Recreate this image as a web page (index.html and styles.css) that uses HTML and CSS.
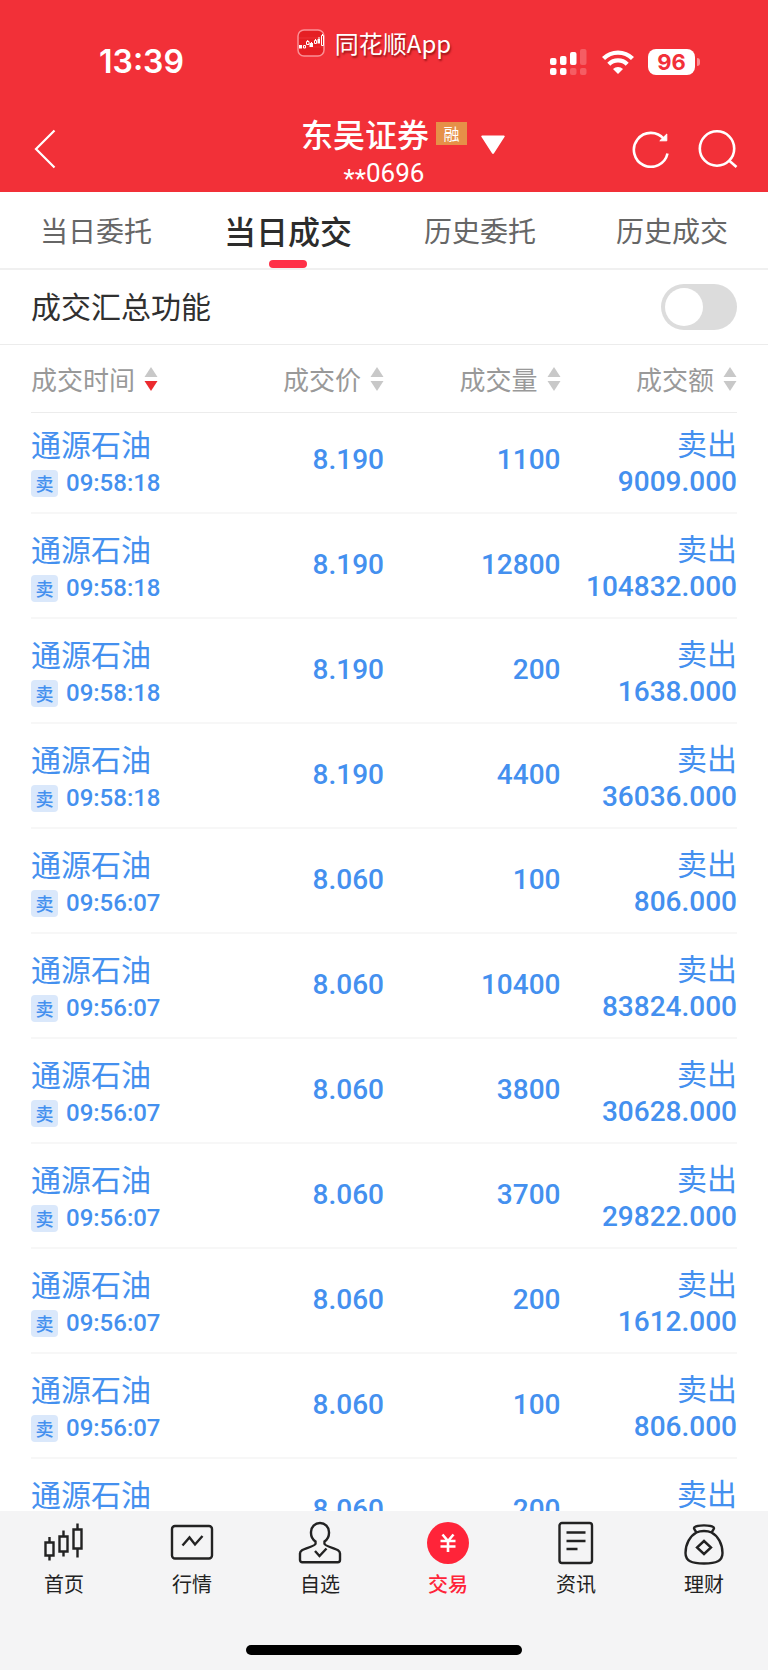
FILE: index.html
```html
<!DOCTYPE html>
<html lang="zh-CN">
<head>
<meta charset="utf-8">
<meta name="viewport" content="width=device-width, initial-scale=1">
<title>当日成交</title>
<link rel="stylesheet" href="styles.css">
</head>
<body>
<div class="app">
  <header class="header">
    <div class="status">
      <time class="clock">13:39</time>
      <div class="brand">
        <svg class="brand-icon" width="28" height="28" viewBox="0 0 28 28" fill="none">
          <rect x="1" y="1" width="26" height="26" rx="6" fill="#e51f24" stroke="#fa9095" stroke-width="1.5"/>
          <path d="M2 9h24M2 18h24" stroke="#f0474b" stroke-width=".5"/>
          <path d="M2 16h3v3.500H2zM12.500 14h3.500v4h-3.500zM20.500 10h2.500v4.500h-2.500z" fill="#fff"/>
          <path d="M6.500 16.500h2v2.500h-2zM9.500 12.500h2.500v3h-2.500zM10.700 11v1.500M17.500 11.500h2v3h-2zM18.500 10v1.500M24.500 6.500h2v10h-2zM25.500 5v1.500M22 8v2M14.500 13v1" stroke="#fff" stroke-width="1"/>
        </svg>
        <span>同花顺App</span>
      </div>
      <div class="indicators">
        <svg width="38" height="26" viewBox="0 0 38 26" fill="#fff">
          <rect x="0" y="9" width="6.500" height="7" rx="2"/>
          <rect x="10" y="7" width="6.500" height="9" rx="2"/>
          <rect x="20" y="3" width="6.500" height="13" rx="2"/>
          <rect x="30" y="0" width="6.500" height="16" rx="2" opacity=".22"/>
          <rect x="0" y="19" width="6.500" height="7" rx="2"/>
          <rect x="10" y="19" width="6.500" height="7" rx="2"/>
          <rect x="20" y="19" width="6.500" height="7" rx="2" opacity=".22"/>
          <rect x="30" y="19" width="6.500" height="7" rx="2" opacity=".22"/>
        </svg>
        <svg width="32" height="24" viewBox="0 0 32 24">
          <g fill="none" stroke="#fff" stroke-width="4.300">
            <path d="M1.500 8.600a20.500 20.500 0 0 1 29 0"/>
            <path d="M6.800 14.200a13 13 0 0 1 18.400 0"/>
          </g>
          <path d="M16 24l-5-5.100a7.200 7.200 0 0 1 10 0z" fill="#fff"/>
        </svg>
        <div class="battery"><span class="battery-level">96</span><span class="battery-tip"></span></div>
      </div>
    </div>
    <div class="nav">
      <button class="icon-btn back" type="button" aria-label="返回">
        <svg width="22" height="40" viewBox="0 0 22 40" fill="none" stroke="#fff" stroke-width="2.200"><path d="M20.500 1.500L2 20l18.500 18.500"/></svg>
      </button>
      <div class="account">
        <h1 class="account-name">东吴证券<span class="tag">融</span></h1>
        <p class="account-no"><span class="mask">**</span>0696</p>
      </div>
      <div class="nav-side">
        <button class="icon-btn switch" type="button" aria-label="切换账户">
          <svg width="24" height="20" viewBox="0 0 24 20" fill="#fff"><path d="M1.500 0.500h21a1 1 0 0 1 .8 1.800L13 18.300a1.300 1.300 0 0 1-2 0L.700 2.300A1 1 0 0 1 1.500.500z"/></svg>
        </button>
        <button class="icon-btn refresh" type="button" aria-label="刷新">
          <svg width="38" height="38" viewBox="0 0 38 38" fill="none" stroke="#fff" stroke-width="2.600"><path d="M35.500 23.500A17 17 0 1 1 32 9"/><path d="M34.800 4v6.800h-7z" fill="#fff" stroke-width="1"/></svg>
        </button>
        <button class="icon-btn" type="button" aria-label="搜索">
          <svg width="40" height="40" viewBox="0 0 40 40" fill="none" stroke="#fff" stroke-width="2.600"><circle cx="19" cy="19.500" r="17.200"/><path d="M31 31.500l7.500 6.500"/></svg>
        </button>
      </div>
    </div>
  </header>

  <nav class="tabs">
    <button class="tab" type="button">当日委托</button>
    <button class="tab tab-active" type="button">当日成交</button>
    <button class="tab" type="button">历史委托</button>
    <button class="tab" type="button">历史成交</button>
  </nav>

  <div class="summary">
    <label class="summary-label" for="summary-toggle">成交汇总功能</label>
    <input class="toggle" id="summary-toggle" type="checkbox" role="switch">
  </div>

  <main class="list">
    <table class="deals">
      <thead>
        <tr>
          <th scope="col"><button class="sort sort-desc" type="button">成交时间<svg width="14" height="26" viewBox="0 0 14 26"><path class="up" d="M7 1l6.500 10H.500z"/><path class="down" d="M7 25l6.500-10H.500z"/></svg></button></th>
          <th scope="col"><button class="sort" type="button">成交价<svg width="14" height="26" viewBox="0 0 14 26"><path class="up" d="M7 1l6.500 10H.500z"/><path class="down" d="M7 25l6.500-10H.500z"/></svg></button></th>
          <th scope="col"><button class="sort" type="button">成交量<svg width="14" height="26" viewBox="0 0 14 26"><path class="up" d="M7 1l6.500 10H.500z"/><path class="down" d="M7 25l6.500-10H.500z"/></svg></button></th>
          <th scope="col"><button class="sort" type="button">成交额<svg width="14" height="26" viewBox="0 0 14 26"><path class="up" d="M7 1l6.500 10H.500z"/><path class="down" d="M7 25l6.500-10H.500z"/></svg></button></th>
        </tr>
      </thead>
      <tbody>
        <tr><td><div class="stock">通源石油</div><div class="when"><span class="side">卖</span><time>09:58:18</time></div></td><td class="num">8.190</td><td class="num">1100</td><td><div class="action">卖出</div><div class="amount">9009.000</div></td></tr>
        <tr><td><div class="stock">通源石油</div><div class="when"><span class="side">卖</span><time>09:58:18</time></div></td><td class="num">8.190</td><td class="num">12800</td><td><div class="action">卖出</div><div class="amount">104832.000</div></td></tr>
        <tr><td><div class="stock">通源石油</div><div class="when"><span class="side">卖</span><time>09:58:18</time></div></td><td class="num">8.190</td><td class="num">200</td><td><div class="action">卖出</div><div class="amount">1638.000</div></td></tr>
        <tr><td><div class="stock">通源石油</div><div class="when"><span class="side">卖</span><time>09:58:18</time></div></td><td class="num">8.190</td><td class="num">4400</td><td><div class="action">卖出</div><div class="amount">36036.000</div></td></tr>
        <tr><td><div class="stock">通源石油</div><div class="when"><span class="side">卖</span><time>09:56:07</time></div></td><td class="num">8.060</td><td class="num">100</td><td><div class="action">卖出</div><div class="amount">806.000</div></td></tr>
        <tr><td><div class="stock">通源石油</div><div class="when"><span class="side">卖</span><time>09:56:07</time></div></td><td class="num">8.060</td><td class="num">10400</td><td><div class="action">卖出</div><div class="amount">83824.000</div></td></tr>
        <tr><td><div class="stock">通源石油</div><div class="when"><span class="side">卖</span><time>09:56:07</time></div></td><td class="num">8.060</td><td class="num">3800</td><td><div class="action">卖出</div><div class="amount">30628.000</div></td></tr>
        <tr><td><div class="stock">通源石油</div><div class="when"><span class="side">卖</span><time>09:56:07</time></div></td><td class="num">8.060</td><td class="num">3700</td><td><div class="action">卖出</div><div class="amount">29822.000</div></td></tr>
        <tr><td><div class="stock">通源石油</div><div class="when"><span class="side">卖</span><time>09:56:07</time></div></td><td class="num">8.060</td><td class="num">200</td><td><div class="action">卖出</div><div class="amount">1612.000</div></td></tr>
        <tr><td><div class="stock">通源石油</div><div class="when"><span class="side">卖</span><time>09:56:07</time></div></td><td class="num">8.060</td><td class="num">100</td><td><div class="action">卖出</div><div class="amount">806.000</div></td></tr>
        <tr><td><div class="stock">通源石油</div></td><td class="num">8.060</td><td class="num">200</td><td><div class="action">卖出</div></td></tr>
      </tbody>
    </table>
  </main>

  <footer class="footer">
    <nav class="menu">
      <a class="menu-item" href="#home">
        <svg width="44" height="44" viewBox="0 0 44 44"><path d="M3.500 21.500h8v13h-8zM17.500 15.500h8v15h-8zM31.500 8.500h8v19h-8zM7.500 16v5M7.500 34.500v5M21.500 9.500v6M21.500 30.500v5M35.500 2.500v6M35.500 27.500v9"/></svg>
        首页
      </a>
      <a class="menu-item" href="#market">
        <svg width="44" height="44" viewBox="0 0 44 44"><rect x="2" y="5" width="40" height="32.500" rx="3"/><path d="M12.500 24.500l7-8 5.500 7 7.500-8.500"/></svg>
        行情
      </a>
      <a class="menu-item" href="#watchlist">
        <svg width="44" height="44" viewBox="0 0 44 44"><path d="M17.500 20.500v2.500c0 1.500-11 5-13.500 6.300-1.300.9-2 1.900-2 3.200V39a2.200 2.200 0 0 0 2.200 2.200h35.600A2.200 2.200 0 0 0 42 39v-6.500c0-1.300-.7-2.300-2-3.200-2.500-1.300-13.500-4.800-13.500-6.300v-2.500c3-2 4.500-5 4.500-8.500v-1c0-5-4-9-9-9s-9 4-9 9v1c0 3.500 1.500 6.500 4.500 8.500z"/><path d="M17 30l4.500 5 7-7.500"/></svg>
        自选
      </a>
      <a class="menu-item menu-active" href="#trade">
        <svg width="44" height="44" viewBox="0 0 44 44"><circle class="disc" cx="22" cy="22" r="21"/><path class="yen" d="M16.500 13.500l5.500 6.500 5.500-6.500M14.500 20h15M14.500 25.500h15M22 20v11"/></svg>
        交易
      </a>
      <a class="menu-item" href="#news">
        <svg width="44" height="44" viewBox="0 0 44 44"><rect x="5.500" y="2" width="32.500" height="40" rx="2.500"/><path d="M12.500 11.500h19M12.500 20h19M12.500 28h11"/></svg>
        资讯
      </a>
      <a class="menu-item" href="#wealth">
        <svg width="44" height="44" viewBox="0 0 44 44"><path d="M14.500 11.500c-1.500-2-2.500-3.500-2.500-4.500 0-3.500 20-3.500 20 0 0 1-1 2.500-2.500 4.500"/><path d="M14.500 11.500c2-1 4.500-1.500 7.500-1.500s5.500.5 7.500 1.500C36 15 40.500 23 40.500 32c0 8-6 10.500-18.500 10.500S3.500 40 3.500 32c0-9 4.500-17 11-20.500zM22 20l7 6.500-7 6.500-7-6.500z"/></svg>
        理财
      </a>
    </nav>
    <div class="home-bar"></div>
  </footer>
</div>
</body>
</html>
```
FILE: styles.css
```css
* {
  box-sizing: border-box;
}

body {
  margin: 0;
  background: #fff;
  font-family: "Noto Sans CJK SC", sans-serif;
  color: #303030;
}

button {
  padding: 0;
  border: 0;
  background: none;
  color: inherit;
  font: inherit;
}

svg {
  display: block;
  flex: none;
}

.app {
  display: flex;
  flex-direction: column;
  height: 100vh;
}

/* Header */

.header {
  flex: none;
  background: #f23038;
  color: #fff;
}

.status {
  display: flex;
  justify-content: space-between;
  align-items: flex-end;
  height: 86px;
  padding: 24px 68px 0 99px;
}

.clock {
  min-width: 99px;
  font: 600 32px/48px Inter, sans-serif;
}

.brand {
  display: flex;
  align-self: flex-start;
  align-items: center;
  gap: 10px;
  font-size: 24px;
  line-height: 38px;
  text-shadow: 1px 2px 2px rgba(90, 0, 0, 0.6);
}

.indicators {
  display: flex;
  align-items: center;
  gap: 14px;
  height: 48px;
}

.battery {
  display: flex;
  align-items: center;
  gap: 2px;
}

.battery-level {
  width: 47px;
  border-radius: 8px;
  background: #fff;
  color: #f23038;
  font: 700 22px/26px Inter, sans-serif;
  text-align: center;
}

.battery-tip {
  width: 3px;
  height: 8px;
  border-radius: 0 3px 3px 0;
  background: #f98f94;
}

.nav {
  display: grid;
  grid-template-columns: 1fr auto 1fr;
  align-items: start;
  padding: 26px 30px 0;
  height: 106px;
}

.icon-btn {
  display: flex;
  align-items: center;
  height: 74px;
}

.back {
  margin-left: 4px;
}

.account {
  text-align: center;
}

.account-name {
  display: flex;
  align-items: center;
  gap: 7px;
  margin: 0;
  font-size: 32px;
  font-weight: 500;
  line-height: 42px;
}

.tag {
  width: 31px;
  background: #e69048;
  font-size: 16px;
  font-weight: 400;
  line-height: 23px;
  text-align: center;
}

.account-no {
  margin: 0;
  font: 400 26px/38px Roboto, sans-serif;
}

.mask {
  vertical-align: sub;
  line-height: 1;
}

.nav-side {
  display: flex;
}

.switch {
  margin: 0 auto 0 14px;
  padding-bottom: 8px;
}

.refresh {
  margin-right: 28px;
}

/* Tabs */

.tabs {
  display: grid;
  grid-template-columns: repeat(4, 1fr);
  flex: none;
  height: 78px;
  border-bottom: 2px solid #f0f0f0;
}

.tab {
  display: flex;
  flex-direction: column;
  align-items: center;
  color: #666;
  font-size: 28px;
  line-height: 76px;
}

.tab-active {
  color: #2c2c2c;
  font-size: 32px;
  font-weight: 500;
  line-height: 68px;
  padding-top: 4px;
}

.tab-active::after {
  content: "";
  width: 38px;
  height: 8px;
  margin-top: -4px;
  border-radius: 4px;
  background: #ff3048;
}

.summary {
  display: flex;
  justify-content: space-between;
  align-items: center;
  flex: none;
  height: 75px;
  padding: 0 31px;
  border-bottom: 1px solid #ececec;
}

.summary-label {
  padding-bottom: 4px;
  font-size: 30px;
}

.toggle {
  appearance: none;
  width: 76px;
  height: 46px;
  margin: 0;
  padding: 4px;
  border-radius: 23px;
  background: #dcdcdc;
}

.toggle::before {
  content: "";
  display: block;
  width: 38px;
  height: 38px;
  border-radius: 50%;
  background: #fff;
}

.toggle:checked {
  background: #ff3048;
}

.toggle:checked::before {
  margin-left: auto;
}

/* Deals */

.list {
  flex: 1;
  min-height: 0;
  padding: 0 31px;
  overflow: hidden auto;
  scrollbar-width: none;
}

.deals {
  width: 100%;
  table-layout: fixed;
  border-collapse: separate;
  border-spacing: 0;
}

.deals th {
  height: 68px;
  padding: 0;
  border-bottom: 1px solid #ececec;
  font-weight: 400;
}

.sort {
  display: flex;
  align-items: center;
  justify-content: flex-end;
  gap: 9px;
  width: 100%;
  color: #999;
  font-size: 26px;
  line-height: 38px;
}

.sort path {
  fill: #c8c8c8;
}

.sort-desc {
  justify-content: flex-start;
}

.sort .down {
  fill: #c8c8c8;
}

.sort-desc .down {
  fill: #eb2b2f;
}

.deals td {
  height: 105px;
  padding: 14px 0 0;
  border-bottom: 2px solid #f7f7f7;
  color: #4490ef;
  font: 500 28px/40px Roboto, sans-serif;
  text-align: right;
  vertical-align: top;
  white-space: nowrap;
}

.deals .num {
  padding-top: 31px;
}

.deals tr:first-child td {
  height: 101px;
  padding-top: 10px;
}

.deals tr:first-child .num {
  padding-top: 27px;
}

.deals td:first-child {
  text-align: left;
}

.stock,
.action {
  font: 400 30px/40px "Noto Sans CJK SC", sans-serif;
}

.action {
  line-height: 38px;
}

.amount {
  line-height: 42px;
}

.when {
  display: flex;
  align-items: center;
  gap: 8px;
  font-size: 24px;
}

.side {
  width: 27px;
  border-radius: 4px;
  background: #dae8fb;
  font: 500 18px/27px "Noto Sans CJK SC", sans-serif;
  text-align: center;
}

/* Bottom menu */

.footer {
  flex: none;
  padding: 10px 0 15px;
  background: #f4f4f5;
}

.menu {
  display: grid;
  grid-template-columns: repeat(6, 1fr);
}

.menu-item {
  display: flex;
  flex-direction: column;
  align-items: center;
  gap: 4px;
  color: #222;
  font-size: 20px;
  line-height: 30px;
  text-decoration: none;
}

.menu-item svg {
  fill: none;
  stroke: #222;
  stroke-width: 2.4;
}

.menu-active {
  color: #ff2439;
  font-weight: 500;
}

.menu-item .disc {
  fill: #ff2439;
  stroke: none;
}

.menu-item .yen {
  stroke: #fff;
  stroke-width: 2.6;
}

.home-bar {
  width: 36%;
  height: 10px;
  margin: 46px auto 0;
  border-radius: 5px;
  background: #000;
}
```
